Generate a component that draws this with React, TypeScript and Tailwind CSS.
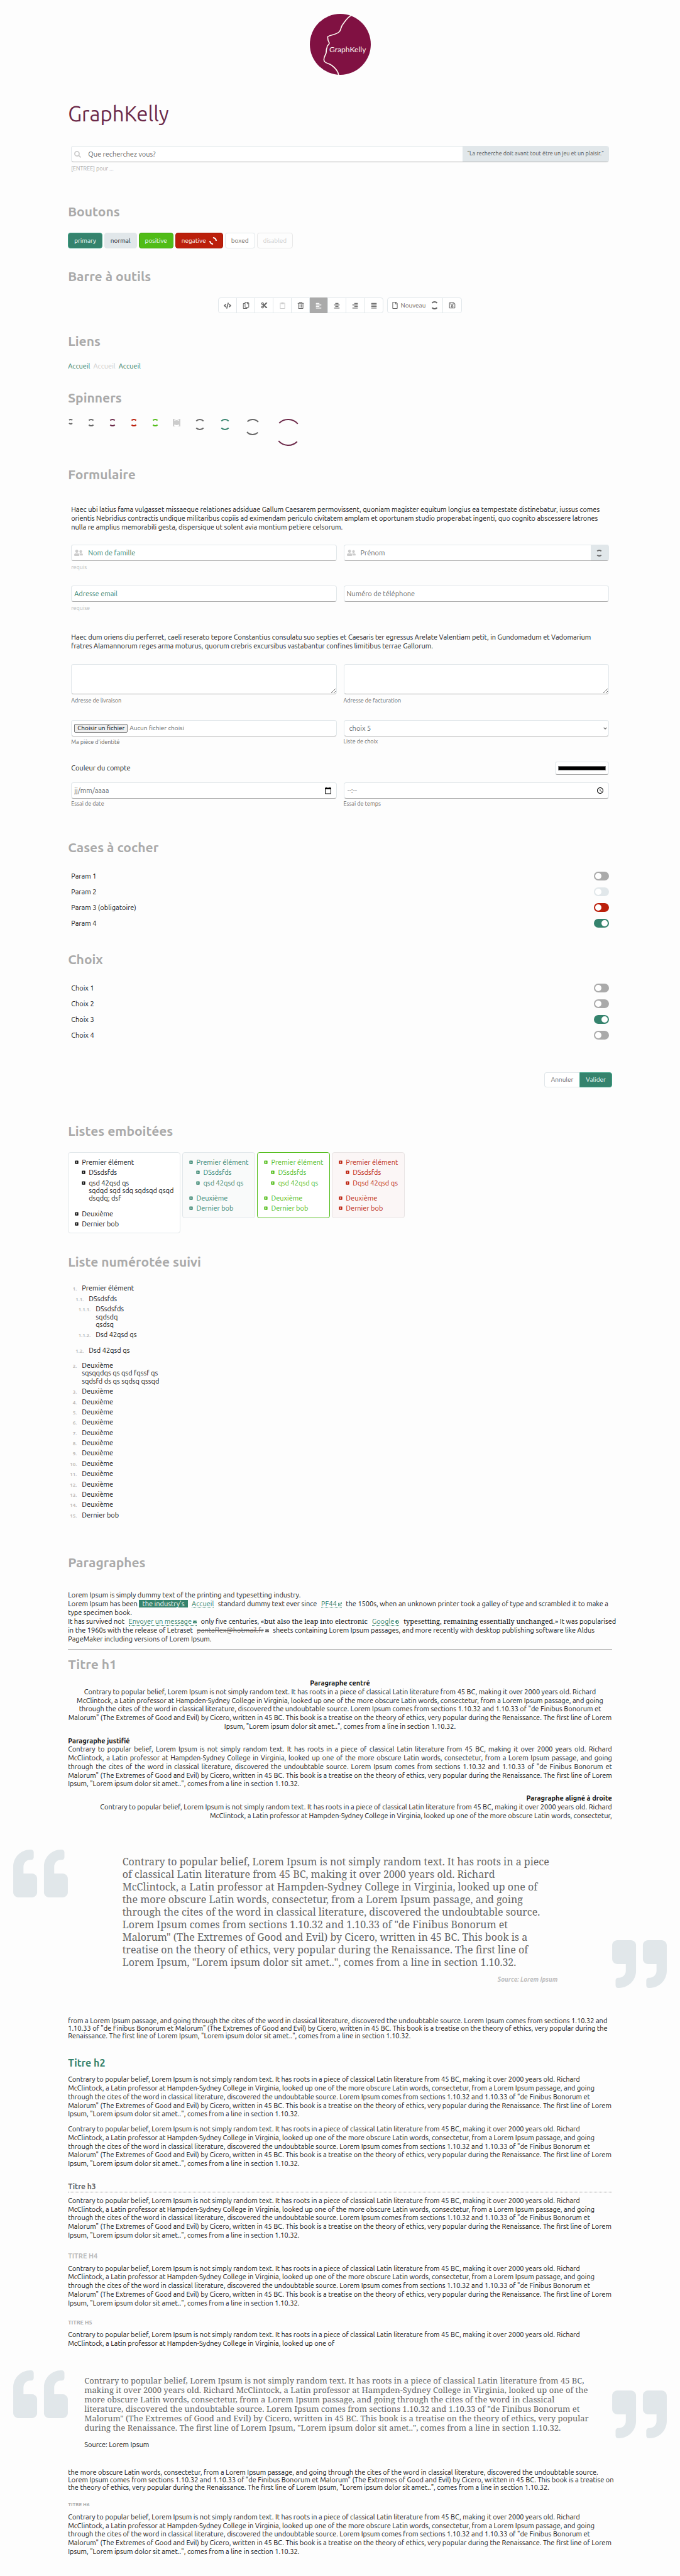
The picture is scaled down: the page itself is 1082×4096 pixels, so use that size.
import type { ReactNode } from "react";
import {
  FaAlignCenter,
  FaAlignJustify,
  FaAlignLeft,
  FaAlignRight,
  FaCaretSquareRight,
  FaCode,
  FaCut,
  FaEnvelope,
  FaExternalLinkAlt,
  FaGlobeAfrica,
  FaRegClipboard,
  FaRegCopy,
  FaRegFile,
  FaRegSave,
  FaRegTrashAlt,
  FaSearch,
  FaUserFriends,
} from "react-icons/fa";
import { MdAccessTime, MdCalendarToday } from "react-icons/md";

const CONTRARY =
  'Contrary to popular belief, Lorem Ipsum is not simply random text. It has roots in a piece of classical Latin literature from 45 BC, making it over 2000 years old. Richard McClintock, a Latin professor at Hampden-Sydney College in Virginia, looked up one of the more obscure Latin words, consectetur, from a Lorem Ipsum passage, and going through the cites of the word in classical literature, discovered the undoubtable source. Lorem Ipsum comes from sections 1.10.32 and 1.10.33 of "de Finibus Bonorum et Malorum" (The Extremes of Good and Evil) by Cicero, written in 45 BC. This book is a treatise on the theory of ethics, very popular during the Renaissance. The first line of Lorem Ipsum, "Lorem ipsum dolor sit amet..", comes from a line in section 1.10.32.';

const FIELD =
  "block w-full rounded-sm border border-[#e1e7ea] border-b-[#aaaaaa] bg-white text-[#666666]";

function Heading({ children, className = "" }: { children: ReactNode; className?: string }) {
  return (
    <h2 className={`text-[21px] leading-[26px] font-bold text-[#aaaaaa] ${className}`}>{children}</h2>
  );
}

function Logo() {
  return (
    <svg viewBox="0 0 144 144" className="size-[97px]" role="img" aria-label="GraphKelly">
      <circle cx="72" cy="72" r="72" fill="#801142" />
      <path
        d="M97 4C88 9 83 18 77 26C73 32 73 39 70 42C62 50 50 49 42 54C42 60 43 64 46 69C46 73 41 74 41 77C41 81 39 82 39 86C39 92 39 94 36 98C33 104 32 109 35 113C38 117 46 117 51 121C59 127 66 133 68 144"
        fill="none"
        stroke="#fdf7f0"
        strokeWidth="2.4"
        strokeLinejoin="round"
      />
      <text x="46" y="90" fontSize="18" fill="#fdf7f0" className="font-['Lato','Liberation_Sans',sans-serif]">
        GraphKelly
      </text>
    </svg>
  );
}

function Spinner({ size, tilt = 0, className = "", stroke = 2 }: { size: number; tilt?: number; className?: string; stroke?: number }) {
  const c = size / 2;
  const r = c - stroke / 2;
  const d = r * 0.72;
  const e = Math.sqrt(r * r - d * d);
  return (
    <svg width={size} height={size} viewBox={`0 0 ${size} ${size}`} className={`shrink-0 ${className}`} aria-hidden="true">
      <g transform={`rotate(${tilt} ${c} ${c})`} fill="none" stroke="currentColor" strokeWidth={stroke}>
        <path d={`M${c - d} ${c - e}A${r} ${r} 0 0 1 ${c + d} ${c - e}`} />
        <path d={`M${c - d} ${c + e}A${r} ${r} 0 0 0 ${c + d} ${c + e}`} />
      </g>
    </svg>
  );
}

function QuoteMark({ closing = false }: { closing?: boolean }) {
  return (
    <svg viewBox="0 32 512 448" className="h-[76px] w-[87px] shrink-0 text-[#e1e7ea]" fill="currentColor" aria-hidden="true">
      <path
        transform={closing ? "rotate(180 256 256)" : undefined}
        d="M464 256h-80v-64c0-35.3 28.7-64 64-64h8c13.3 0 24-10.7 24-24V56c0-13.3-10.7-24-24-24h-8c-88.4 0-160 71.6-160 160v240c0 26.5 21.5 48 48 48h128c26.5 0 48-21.5 48-48V304c0-26.5-21.5-48-48-48zm-288 0H96v-64c0-35.3 28.7-64 64-64h8c13.3 0 24-10.7 24-24V56c0-13.3-10.7-24-24-24h-8C71.6 32 0 103.6 0 192v240c0 26.5 21.5 48 48 48h128c26.5 0 48-21.5 48-48V304c0-26.5-21.5-48-48-48z"
      />
    </svg>
  );
}

function Tool({ label, icon, className = "" }: { label: string; icon: ReactNode; className?: string }) {
  return (
    <button type="button" aria-label={label} className={`flex w-[29px] items-center justify-center ${className}`}>
      {icon}
    </button>
  );
}

function Toggle({ id, label, type, name, tone, checked = false, disabled = false }: {
  id: string; label: string; type: "checkbox" | "radio"; name: string; tone: string; checked?: boolean; disabled?: boolean;
}) {
  return (
    <div className="flex h-[25px] items-center justify-between">
      <label htmlFor={id}>{label}</label>
      <input
        id={id}
        name={name}
        type={type}
        defaultChecked={checked}
        disabled={disabled}
        className={`flex h-[14px] w-6 appearance-none items-center rounded-full px-[2px] before:size-[10px] before:rounded-full before:bg-white checked:justify-end checked:bg-[#35836d] ${tone}`}
      />
    </div>
  );
}

function Bullet({ children }: { children: ReactNode }) {
  return (
    <div className="flex py-[2px]">
      <FaCaretSquareRight className="mt-[3px] mr-[5px] size-[6px] shrink-0" />
      <span>{children}</span>
    </div>
  );
}

function NestedList({ className, second }: { className: string; second: ReactNode }) {
  return (
    <ul className={`rounded-sm border pt-[7px] pb-[6px] pl-[10px] leading-[1.125] ${className}`}>
      <li>
        <Bullet>Premier élément</Bullet>
        <ul className="mb-2 pl-[11px]">
          <li><Bullet>DSsdsfds</Bullet></li>
          <li><Bullet>{second}</Bullet></li>
        </ul>
      </li>
      <li><Bullet>Deuxième</Bullet></li>
      <li><Bullet>Dernier bob</Bullet></li>
    </ul>
  );
}

function Numbered({ n, children }: { n: string; children: ReactNode }) {
  return (
    <div className="flex items-baseline py-[2px]">
      <span className="mr-2 w-[26px] shrink-0 text-right text-[8px] font-bold text-[#bbbbbb]">{n}</span>
      <span>{children}</span>
    </div>
  );
}

function Body({ className = "" }: { className?: string }) {
  return <p className={`leading-[1.25] ${className}`}>{CONTRARY}</p>;
}

const LINK = "mx-1 border-b border-dotted border-[#35836d] text-[#35836d]";

export default function App() {
  return (
    <main className="bg-[#fdfdfd] pt-[22px] pb-[31px] font-['Ubuntu','Roboto',sans-serif] text-[11px] text-[#111111]">
      <header className="flex justify-center">
        <Logo />
      </header>

      <div className="mx-[10%]">
        <h1 className="mt-[42px] text-[33px] leading-10 text-[#6b2848]">GraphKelly</h1>

        <div className="mx-[5px] mt-[31px]">
          <div className="flex h-[26px] items-stretch overflow-hidden rounded-sm border border-[#e1e7ea] border-b-[#aaaaaa] bg-white">
            <span className="flex items-center pl-1 text-[#cccccc]">
              <FaSearch className="size-[11px]" />
            </span>
            <input aria-label="Recherche" placeholder="Que recherchez vous?" className="min-w-0 flex-1 pl-[11px] placeholder:text-[#666666]" />
            <span className="flex items-center bg-[#e1e7ea] px-[7px] text-[9px] text-[#555555]">
              “La recherche doit avant tout être un jeu et un plaisir.”
            </span>
          </div>
          <p className="mt-1 text-[9px] leading-3 text-[#aaaaaa]">[ENTREE] pour ...</p>
        </div>

        <Heading className="mt-[49px]">Boutons</Heading>
        <div className="mt-[21px] flex h-[25px] gap-[3px] text-[10px]">
          <button type="button" className="rounded-sm border border-[#3fa287] bg-[#35836d] px-[9px] text-white">primary</button>
          <button type="button" className="rounded-sm border border-[#e1e7ea] bg-[#e1e7ea] px-[9px]">normal</button>
          <button type="button" className="rounded-sm border border-[#44a613] bg-[#50bc17] px-[9px] text-white">positive</button>
          <button type="button" className="flex items-center gap-[5px] rounded-sm border border-[#a61a08] bg-[#bb1f0b] px-[9px] text-white">
            negative
            <Spinner size={12} tilt={45} />
          </button>
          <button type="button" className="rounded-sm border border-[#e1e7ea] bg-white px-[9px] text-[#666666]">boxed</button>
          <button type="button" disabled className="rounded-sm border border-[#e8e8e8] px-[9px] text-[#cccccc]">disabled</button>
        </div>

        <Heading className="mt-[31px]">Barre à outils</Heading>
        <div className="mt-[21px] flex h-[25px] justify-center gap-[6px] text-[10px] text-[#666666]">
          <div className="flex divide-x divide-[#e1e7ea] rounded-sm border border-[#e1e7ea] bg-white">
            <Tool label="Code" icon={<FaCode className="size-[12px]" />} className="w-8" />
            <Tool label="Copier" icon={<FaRegCopy className="size-[11px]" />} />
            <Tool label="Couper" icon={<FaCut className="size-[11px]" />} />
            <Tool label="Coller" icon={<FaRegClipboard className="size-[11px]" />} className="text-[#cccccc]" />
            <Tool label="Supprimer" icon={<FaRegTrashAlt className="size-[11px]" />} />
            <Tool label="Aligner à gauche" icon={<FaAlignLeft className="size-[10px]" />} className="-my-px bg-[#aaaaaa] text-white" />
            <Tool label="Centrer" icon={<FaAlignCenter className="size-[10px]" />} />
            <Tool label="Aligner à droite" icon={<FaAlignRight className="size-[10px]" />} />
            <Tool label="Justifier" icon={<FaAlignJustify className="size-[10px]" />} />
          </div>
          <div className="flex divide-x divide-[#e1e7ea] rounded-sm border border-[#e1e7ea] bg-white">
            <button type="button" className="flex w-[88px] items-center justify-center gap-1">
              <FaRegFile className="size-[11px]" />
              Nouveau
              <Spinner size={13} className="ml-1" />
            </button>
            <Tool label="Enregistrer" icon={<FaRegSave className="size-[11px]" />} />
          </div>
        </div>

        <Heading className="mt-[31px]">Liens</Heading>
        <nav className="mt-[19px] flex gap-[5px] leading-4">
          <a href="#accueil" className="text-[#35836d]">Accueil</a>
          <a aria-disabled="true" className="text-[#cccccc]">Accueil</a>
          <a href="#accueil" className="text-[#35836d]">Accueil</a>
        </nav>

        <Heading className="mt-[29px]">Spinners</Heading>
        <div className="mt-[21px] flex items-start gap-[22px] text-[#666666]">
          <Spinner size={9} tilt={2} />
          <Spinner size={12} />
          <Spinner size={12} className="text-[#6b2848]" />
          <Spinner size={12} className="text-[#bb1f0b]" />
          <Spinner size={12} className="text-[#50bc17]" />
          <Spinner size={12} className="bg-[#cccccc] text-white" />
          <Spinner size={18} />
          <Spinner size={18} className="text-[#35836d]" />
          <Spinner size={26} tilt={2} />
          <Spinner size={43} tilt={2} className="text-[#6b2848]" />
        </div>

        <Heading className="mt-[32px]">Formulaire</Heading>
        <form className="mx-[5px] mt-[37px]">
          <p className="leading-[1.25]">
            Haec ubi latius fama vulgasset missaeque relationes adsiduae Gallum Caesarem permovissent, quoniam magister equitum longius ea tempestate distinebatur, iussus comes orientis Nebridius contractis undique militaribus copiis ad eximendam periculo civitatem amplam et oportunam studio properabat ingenti, quo cognito abscessere latrones nulla re amplius memorabili gesta, dispersique ut solent avia montium petiere celsorum.
          </p>
          <div className="mt-[21px] grid grid-cols-2 gap-x-[11px] gap-y-[23px]">
            <div>
              <div className={`${FIELD} flex h-[26px] items-center`}>
                <FaUserFriends className="ml-1 size-[14px] text-[#cccccc]" />
                <input aria-label="Nom de famille" required placeholder="Nom de famille" className="min-w-0 flex-1 pl-2 placeholder:text-[#35836d]" />
              </div>
              <p className="mt-1 text-[9px] leading-3 text-[#bbbbbb]">requis</p>
            </div>
            <div>
              <div className={`${FIELD} flex h-[26px] items-center`}>
                <FaUserFriends className="ml-1 size-[14px] text-[#cccccc]" />
                <input aria-label="Prénom" placeholder="Prénom" className="min-w-0 flex-1 pl-2 placeholder:text-[#666666]" />
                <span className="flex w-7 items-center justify-center self-stretch bg-[#e1e7ea]">
                  <Spinner size={11} />
                </span>
              </div>
            </div>
            <div>
              <input aria-label="Adresse email" type="email" required placeholder="Adresse email" className={`${FIELD} h-[26px] px-1 placeholder:text-[#35836d]`} />
              <p className="mt-1 text-[9px] leading-3 text-[#bbbbbb]">requise</p>
            </div>
            <div>
              <input aria-label="Numéro de téléphone" type="tel" placeholder="Numéro de téléphone" className={`${FIELD} h-[26px] px-1 placeholder:text-[#666666]`} />
            </div>
          </div>

          <p className="mt-[34px] leading-[1.25]">
            Haec dum oriens diu perferret, caeli reserato tepore Constantius consulatu suo septies et Caesaris ter egressus Arelate Valentiam petit, in Gundomadum et Vadomarium fratres Alamannorum reges arma moturus, quorum crebris excursibus vastabantur confines limitibus terrae Gallorum.
          </p>
          <div className="mt-[21px] grid grid-cols-2 gap-x-[11px] text-[#666666]">
            <div>
              <textarea id="livraison" className={`${FIELD} h-12`} />
              <label htmlFor="livraison" className="mt-1 block text-[9px] leading-3">Adresse de livraison</label>
            </div>
            <div>
              <textarea id="facturation" className={`${FIELD} h-12`} />
              <label htmlFor="facturation" className="mt-1 block text-[9px] leading-3">Adresse de facturation</label>
            </div>
          </div>
          <div className="mt-[25px] grid grid-cols-2 gap-x-[11px] text-[#666666]">
            <div>
              <div className={`${FIELD} flex h-[26px] items-center gap-[3px] px-1 text-[10px]`}>
                <label htmlFor="fichier" className="rounded-xs border border-[#767676] bg-[#efefef] px-1 leading-3 text-black">Choisir un fichier</label>
                <input id="fichier" type="file" className="sr-only" />
                <span>Aucun fichier choisi</span>
              </div>
              <label htmlFor="fichier" className="mt-[3px] block text-[9px] leading-3">Ma pièce d'identité</label>
            </div>
            <div>
              <div className={`${FIELD} flex h-[26px] items-center pr-[2px]`}>
                <select id="liste" className="flex-1 appearance-none pl-2" defaultValue="5">
                  <option value="5">choix 5</option>
                </select>
                <svg viewBox="0 0 10 10" className="size-[6px] shrink-0" aria-hidden="true">
                  <path d="M1 3L5 7L9 3" fill="none" stroke="currentColor" strokeWidth="2" />
                </svg>
              </div>
              <label htmlFor="liste" className="mt-[2px] block text-[9px] leading-3">Liste de choix</label>
            </div>
          </div>
          <div className="mt-[25px] flex items-center justify-between">
            <label htmlFor="couleur">Couleur du compte</label>
            <input id="couleur" type="color" defaultValue="#000000" className="h-[21px] w-[86px] appearance-none rounded-sm border border-[#e1e7ea] border-b-[#aaaaaa] bg-white px-1 py-[6px] [&::-webkit-color-swatch-wrapper]:p-0 [&::-webkit-color-swatch]:border-[#777777]" />
          </div>
          <div className="mt-3 grid grid-cols-2 gap-x-[11px] text-[#666666]">
            <div>
              <div className={`${FIELD} flex h-[26px] items-center pr-[7px] pl-1`}>
                <input id="date" placeholder="jj/mm/aaaa" className="min-w-0 flex-1 placeholder:text-[#666666]" />
                <MdCalendarToday className="size-[12px] text-black" />
              </div>
              <label htmlFor="date" className="mt-[2px] block text-[9px] leading-3">Essai de date</label>
            </div>
            <div>
              <div className={`${FIELD} flex h-[26px] items-center pr-[7px] pl-[5px]`}>
                <input id="temps" placeholder="--:--" className="min-w-0 flex-1 placeholder:text-[#666666]" />
                <MdAccessTime className="size-[12px] text-black" />
              </div>
              <label htmlFor="temps" className="mt-[2px] block text-[9px] leading-3">Essai de temps</label>
            </div>
          </div>
        </form>

        <Heading className="mt-[50px]">Cases à cocher</Heading>
        <div className="mx-[5px] mt-[21px]">
          <Toggle id="p1" name="p1" type="checkbox" label="Param 1" tone="bg-[#aaaaaa]" />
          <Toggle id="p2" name="p2" type="checkbox" label="Param 2" tone="bg-[#e1e7ea]" disabled />
          <Toggle id="p3" name="p3" type="checkbox" label="Param 3 (obligatoire)" tone="bg-[#bb1f0b]" />
          <Toggle id="p4" name="p4" type="checkbox" label="Param 4" tone="bg-[#aaaaaa]" checked />
        </div>

        <Heading className="mt-[31px]">Choix</Heading>
        <div className="mx-[5px] mt-[21px]">
          <Toggle id="c1" name="choix" type="radio" label="Choix 1" tone="bg-[#aaaaaa]" />
          <Toggle id="c2" name="choix" type="radio" label="Choix 2" tone="bg-[#aaaaaa]" />
          <Toggle id="c3" name="choix" type="radio" label="Choix 3" tone="bg-[#aaaaaa]" checked />
          <Toggle id="c4" name="choix" type="radio" label="Choix 4" tone="bg-[#aaaaaa]" />
        </div>
        <div className="mt-[46px] flex h-6 justify-end text-[10px]">
          <button type="button" className="rounded-l-sm border border-r-0 border-[#e1e7ea] bg-white px-[10px] text-[#666666]">Annuler</button>
          <button type="button" className="rounded-r-sm border border-[#3fa287] bg-[#35836d] px-[9px] text-white">Valider</button>
        </div>

        <Heading className="mt-[56px]">Listes emboitées</Heading>
        <div className="mt-[21px] flex items-start gap-[3px]">
          <NestedList
            className="border-[#e1e7ea] bg-white pr-[10px]"
            second={<>qsd 42qsd qs<br />sqdqd sqd sdq sqdsqd qsqd<br />dsqdq; dsf</>}
          />
          <NestedList className="border-[#e1e7ea] bg-[#f9fafa] pr-[10px] text-[#35836d]" second="qsd 42qsd qs" />
          <NestedList className="border-[#50bc17] bg-white pr-[10px] text-[#50bc17]" second="qsd 42qsd qs" />
          <NestedList className="border-[#e8e4e4] bg-[#fbf6f6] pr-[10px] text-[#bb1f0b]" second="Dqsd 42qsd qs" />
        </div>

        <Heading className="mt-[32px]">Liste numérotée suivi</Heading>
        <ol className="mt-[21px] -ml-3 leading-[1.125]">
          <li>
            <Numbered n="1.">Premier élément</Numbered>
            <ol className="mb-2 ml-[11px]">
              <li>
                <Numbered n="1.1.">DSsdsfds</Numbered>
                <ol className="mb-2 ml-[11px]">
                  <li><Numbered n="1.1.1.">DSsdsfds<br />sqdsdq<br />qsdsq</Numbered></li>
                  <li><Numbered n="1.1.2.">Dsd 42qsd qs</Numbered></li>
                </ol>
              </li>
              <li><Numbered n="1.2.">Dsd 42qsd qs</Numbered></li>
            </ol>
          </li>
          <li><Numbered n="2.">Deuxième<br />sqsqqdqs qs qsd fqssf qs<br />sqdsfd ds qs sqdsq qssqd</Numbered></li>
          {[3, 4, 5, 6, 7, 8, 9, 10, 11, 12, 13, 14].map((n) => (
            <li key={n}><Numbered n={`${n}.`}>Deuxième</Numbered></li>
          ))}
          <li><Numbered n="15.">Dernier bob</Numbered></li>
        </ol>

        <Heading className="mt-[54px]">Paragraphes</Heading>
        <p className="mt-[32px] leading-[14px] whitespace-nowrap">
          Lorem Ipsum is simply dummy text of the printing and typesetting industry.
          <br />
          Lorem Ipsum has been{" "}
          <mark className="bg-[#35836d] px-[5px] text-white">the industry's</mark>{" "}
          <a href="#accueil" className={LINK}>Accueil</a> standard dummy text ever since{" "}
          <a href="#pf44" className={LINK}>PF44<FaExternalLinkAlt className="ml-[2px] inline size-[6px]" /></a> the 1500s, when an unknown printer took a galley of type and scrambled it to make a
          <br />
          type specimen book.
          <br />
          It has survived not{" "}
          <a href="#message" className={LINK}>Envoyer un message<FaEnvelope className="ml-[2px] inline size-[6px]" /></a> only five centuries,{" "}
          <q className="font-['Noto_Serif','Liberation_Serif',serif] before:content-['«'] after:content-['»']">
            but also the leap into electronic{" "}
            <a href="#google" className={`${LINK} font-['Ubuntu','Roboto',sans-serif]`}>Google<FaGlobeAfrica className="ml-[2px] inline size-[6px]" /></a> typesetting, remaining essentially unchanged.
          </q>{" "}
          It was popularised
          <br />
          in the 1960s with the release of Letraset{" "}
          <a href="#mail" className="mx-1 text-[#666666]"><s>pantaflex@hotmail.fr</s><FaEnvelope className="ml-[2px] inline size-[6px]" /></a> sheets containing Lorem Ipsum passages, and more recently with desktop publishing software like Aldus
          <br />
          PageMaker including versions of Lorem Ipsum.
        </p>
        <hr className="mt-[9px] border-[#aaaaaa]" />

        <Heading className="mt-[10px]">Titre h1</Heading>
        <div className="mt-[11px] text-center leading-[1.25]">
          <strong>Paragraphe centré</strong>
          <Body />
        </div>
        <div className="mt-[9px] text-justify leading-[1.25]">
          <strong>Paragraphe justifié</strong>
          <Body />
        </div>
        <div className="mt-[9px] text-right leading-[1.25]">
          <strong>Paragraphe aligné à droite</strong>
          <p>
            Contrary to popular belief, Lorem Ipsum is not simply random text. It has roots in a piece of classical Latin literature from 45 BC, making it over 2000 years old. Richard McClintock, a Latin professor at Hampden-Sydney College in Virginia, looked up one of the more obscure Latin words, consectetur,
          </p>
        </div>
      </div>

      <figure className="mt-[47px] flex">
        <div className="flex w-1/10 shrink-0 justify-end"><QuoteMark /></div>
        <div className="flex-1 px-[8%] pt-[9px] pb-[7px]">
          <blockquote className="pr-[10px] font-['Noto_Serif','Liberation_Serif',serif] text-base leading-5 text-[#666666]">{CONTRARY}</blockquote>
          <figcaption className="mt-3 text-right text-[10px] leading-3 font-bold text-[#bbbbbb] italic">Source: Lorem Ipsum</figcaption>
        </div>
        <div className="flex w-1/10 shrink-0 items-end"><QuoteMark closing /></div>
      </figure>

      <div className="mx-[10%]">
        <p className="mt-[46px] leading-3">
          from a Lorem Ipsum passage, and going through the cites of the word in classical literature, discovered the undoubtable source. Lorem Ipsum comes from sections 1.10.32 and 1.10.33 of "de Finibus Bonorum et Malorum" (The Extremes of Good and Evil) by Cicero, written in 45 BC. This book is a treatise on the theory of ethics, very popular during the Renaissance. The first line of Lorem Ipsum, "Lorem ipsum dolor sit amet..", comes from a line in section 1.10.32.
        </p>
        <h2 className="mt-[27px] text-base leading-5 font-bold text-[#35836d]">Titre h2</h2>
        <Body className="mt-[10px]" />
        <Body className="mt-[10px]" />
        <h3 className="mt-[21px] border-b border-dotted border-[#888888] text-[12px] leading-4 font-bold text-[#666666]">Titre h3</h3>
        <Body className="mt-[7px]" />
        <h4 className="mt-[18px] leading-[14px] font-bold text-[#bbbbbb] uppercase">Titre h4</h4>
        <Body className="mt-[7px]" />
        <h5 className="mt-[18px] text-[9px] leading-3 font-bold text-[#aaaaaa] uppercase">Titre h5</h5>
        <p className="mt-[7px] leading-[1.25]">
          Contrary to popular belief, Lorem Ipsum is not simply random text. It has roots in a piece of classical Latin literature from 45 BC, making it over 2000 years old. Richard McClintock, a Latin professor at Hampden-Sydney College in Virginia, looked up one of
        </p>
      </div>

      <figure className="mt-[35px]">
        <div className="flex">
          <div className="flex w-1/10 shrink-0 justify-end"><QuoteMark /></div>
          <blockquote className="flex-1 px-[26px] py-[9px] font-['Noto_Serif','Liberation_Serif',serif] text-[13px] leading-[15px] whitespace-pre-line text-[#666666]">
            {CONTRARY.replace("BC, making", "BC,\nmaking").replace("classical literature,", "classical\nliterature,")}
          </blockquote>
          <div className="flex w-1/10 shrink-0 items-end"><QuoteMark closing /></div>
        </div>
        <figcaption className="mx-[10%] mt-[3px] pl-[26px] leading-[14px]">Source: Lorem Ipsum</figcaption>
      </figure>

      <div className="mx-[10%]">
        <p className="-mr-2 mt-[31px] leading-3">
          the more obscure Latin words, consectetur, from a Lorem Ipsum passage, and going through the cites of the word in classical literature, discovered the undoubtable source.
          <br />
          Lorem Ipsum comes from sections 1.10.32 and 1.10.33 of "de Finibus Bonorum et Malorum" (The Extremes of Good and Evil) by Cicero, written in 45 BC. This book is a treatise on the theory of ethics, very popular during the Renaissance. The first line of Lorem Ipsum, "Lorem ipsum dolor sit amet..", comes from a line in section 1.10.32.
        </p>
        <h6 className="mt-[16px] text-[8px] leading-3 font-bold text-[#aaaaaa] uppercase">Titre h6</h6>
        <Body className="mt-[7px]" />
      </div>
    </main>
  );
}
